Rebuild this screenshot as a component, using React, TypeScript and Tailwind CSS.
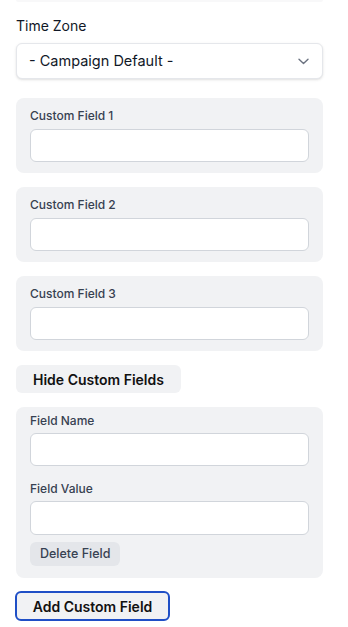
import React from "react";

function FieldCard({ label }: { label: string }) {
  return (
    <div className="rounded-lg bg-[#f1f2f4] px-[14px] pt-[10px] pb-[11px]">
      <div className="mb-[5px] text-[12px] leading-4 font-medium text-[#374151]">{label}</div>
      <input className="block h-[33px] w-full rounded-md border border-[#d1d5db] bg-white outline-none" />
    </div>
  );
}

export default function App() {
  return (
    <div className="min-h-[627px] bg-white" style={{ fontFamily: "Inter, 'Liberation Sans', sans-serif" }}>
      <div className="ml-4 w-[307px]">
        <div className="h-[2px] rounded-b-md bg-[#f8f8f9]" />
        <div className="mt-[14px] text-[14px] leading-5 text-[#111827]">Time Zone</div>
        <div className="mt-[7px] flex h-[36px] items-center justify-between rounded-md border border-[#e5e7eb] bg-white pl-3 pr-[13px] shadow-sm">
          <span className="text-[14.5px] text-[#111827]">- Campaign Default -</span>
          <svg width="11" height="7" viewBox="0 0 11 7" fill="none">
            <path d="M1 1.2L5.5 5.5L10 1.2" stroke="#6b7280" strokeWidth="1.4" strokeLinecap="round" strokeLinejoin="round" />
          </svg>
        </div>

        <div className="mt-[19px] flex flex-col gap-[14px]">
          <FieldCard label="Custom Field 1" />
          <FieldCard label="Custom Field 2" />
          <FieldCard label="Custom Field 3" />
          <div>
            <button className="h-[28px] rounded-md bg-[#f1f2f4] px-[17px] text-[14px] font-semibold text-[#111]">
              Hide Custom Fields
            </button>
          </div>
          <div className="rounded-lg bg-[#f1f2f4] px-[14px] pt-[6px] pb-[12px]">
            <div className="mb-1 text-[12px] leading-4 font-medium text-[#374151]">Field Name</div>
            <input className="block h-[33px] w-full rounded-md border border-[#d1d5db] bg-white outline-none" />
            <div className="mt-[15px] mb-1 text-[12px] leading-4 font-medium text-[#374151]">Field Value</div>
            <input className="block h-[34px] w-full rounded-md border border-[#d1d5db] bg-white outline-none" />
            <button className="mt-[7px] h-[24px] rounded-md bg-[#e4e6ea] px-[10px] text-[12.5px] font-medium text-[#374151]">
              Delete Field
            </button>
          </div>
        </div>
        <button className="-ml-px mt-[13px] h-[30px] w-[155px] rounded-md border-2 border-[#1f4fc6] bg-[#f1f2f4] text-[14px] font-semibold text-[#111]">
          Add Custom Field
        </button>
      </div>
    </div>
  );
}
